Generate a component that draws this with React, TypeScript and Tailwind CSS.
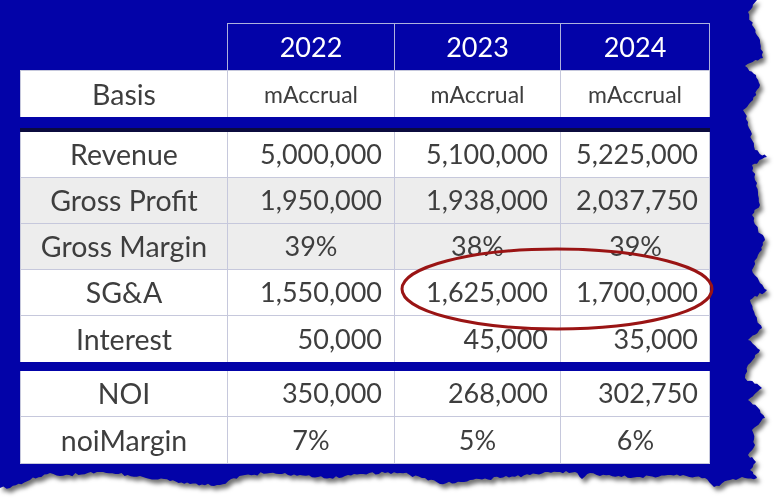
import React from 'react';

type Row = { label: string; vals: string[]; gray?: boolean; pct?: boolean };

const topRows: Row[] = [
  { label: 'Revenue', vals: ['5,000,000', '5,100,000', '5,225,000'] },
  { label: 'Gross Profit', vals: ['1,950,000', '1,938,000', '2,037,750'], gray: true },
  { label: 'Gross Margin', vals: ['39%', '38%', '39%'], gray: true, pct: true },
  { label: 'SG&A', vals: ['1,550,000', '1,625,000', '1,700,000'] },
  { label: 'Interest', vals: ['50,000', '45,000', '35,000'] },
];

const bottomRows: Row[] = [
  { label: 'NOI', vals: ['350,000', '268,000', '302,750'] },
  { label: 'noiMargin', vals: ['7%', '5%', '6%'], pct: true },
];

// key points of the torn paper edge (right side going down, then bottom going left)
const edge: [number, number][] = [
  [757, 0], [748, 12], [752, 25], [760, 40], [763, 58], [745, 66], [756, 75], [760, 85],
  [753, 100], [743, 110], [748, 122], [752, 140], [755, 150], [767, 157], [752, 165],
  [755, 180], [758, 195], [760, 205], [752, 215], [758, 230], [765, 240], [758, 255],
  [752, 270], [760, 283], [767, 290], [750, 300], [755, 315], [762, 328], [748, 340],
  [760, 350], [748, 365], [745, 378], [762, 388], [748, 400], [760, 410], [765, 418],
  [752, 430], [755, 445], [748, 455], [756, 462], [750, 470], [757, 478],
  [745, 478], [730, 480], [714, 487], [705, 478], [680, 476], [640, 477], [600, 476],
  [590, 473], [582, 479], [575, 472], [560, 472], [530, 475], [500, 478], [470, 480],
  [440, 484], [425, 478], [400, 473], [385, 473], [360, 474], [330, 478], [300, 475],
  [270, 473], [245, 475], [220, 485], [190, 484], [170, 481], [140, 476], [100, 472],
  [60, 476], [50, 473], [30, 480], [10, 488], [0, 488],
];

function rnd(i: number) {
  const x = Math.sin(i * 12.9898 + 4.1) * 43758.5453;
  return x - Math.floor(x);
}

function tornPath() {
  const pts: string[] = ['0px 0px'];
  let k = 0;
  for (let i = 0; i < edge.length - 1; i++) {
    const [x1, y1] = edge[i];
    const [x2, y2] = edge[i + 1];
    const len = Math.hypot(x2 - x1, y2 - y1);
    const steps = Math.max(1, Math.round(len / 3));
    for (let s = 0; s < steps; s++) {
      const t = s / steps;
      const j = s === 0 ? 0 : (rnd(k++) - 0.5) * 3;
      const vertical = Math.abs(y2 - y1) > Math.abs(x2 - x1);
      const x = x1 + (x2 - x1) * t + (vertical ? j : 0);
      const y = y1 + (y2 - y1) * t + (vertical ? 0 : j);
      pts.push(`${x.toFixed(1)}px ${y.toFixed(1)}px`);
    }
  }
  const last = edge[edge.length - 1];
  pts.push(`${last[0]}px ${last[1]}px`);
  return `polygon(${pts.join(',')})`;
}

function DataRow({ row, last }: { row: Row; last?: boolean }) {
  const bg = row.gray ? 'bg-[#ededed]' : 'bg-white';
  return (
    <div
      className={`grid h-[46px] grid-cols-[207px_167px_166px_149px] ${bg} ${last ? '' : 'border-b border-[#c6c8dc]'}`}
    >
      <div className="flex items-center justify-center border-r border-[#c6c8dc] text-[28.5px]">{row.label}</div>
      {row.vals.map((v, i) => (
        <div
          key={i}
          className={`flex items-center ${row.pct ? 'justify-center' : 'justify-end pr-[12px]'} ${i < 2 ? 'border-r border-[#c6c8dc]' : ''}`}
        >
          {v}
        </div>
      ))}
    </div>
  );
}

export default function App() {
  return (
    <div className="relative h-[498px] w-[774px] overflow-hidden bg-white font-['Lato',sans-serif] text-[27px] text-[#3e3e3e]">
      <div className="drop-shadow-[3px_4px_2px_rgba(0,0,0,0.55)]">
        <div className="h-[498px] w-[774px] bg-[#0303a8] pl-[20px] pt-[23px]" style={{ clipPath: tornPath() }}>
          <div className="w-[690px]">
            {/* year header */}
            <div className="grid h-[47px] grid-cols-[208px_167px_166px_149px] text-white">
              <div className="border-r border-[#aeb2dd]" />
              {['2022', '2023', '2024'].map((y) => (
                <div key={y} className="flex items-center justify-center border-r border-t border-[#aeb2dd]">
                  {y}
                </div>
              ))}
            </div>

            {/* basis */}
            <div className="border-l border-[#c6c8dc]">
              <div className="grid h-[47px] grid-cols-[207px_167px_166px_149px] border-t border-[#c6c8dc] bg-white">
                <div className="flex items-center justify-center border-r border-[#c6c8dc] text-[28.5px]">Basis</div>
                <div className="flex items-center justify-center border-r border-[#c6c8dc] text-[23px]">mAccrual</div>
                <div className="flex items-center justify-center border-r border-[#c6c8dc] text-[23px]">mAccrual</div>
                <div className="flex items-center justify-center border-r border-[#c6c8dc] text-[23px]">mAccrual</div>
              </div>
            </div>

            <div className="h-[15px] border-b-4 border-[#0b0b3e] bg-[#0303a8]" />

            <div className="border-x border-[#c6c8dc]">
              {topRows.map((r, i) => (
                <DataRow key={r.label} row={r} last={i === topRows.length - 1} />
              ))}
            </div>

            <div className="h-[9px] bg-[#0303a8]" />

            <div className="border-x border-b border-[#c6c8dc]">
              {bottomRows.map((r, i) => (
                <DataRow key={r.label} row={r} last={i === bottomRows.length - 1} />
              ))}
            </div>
          </div>
        </div>
      </div>

      <svg className="pointer-events-none absolute left-0 top-0" width="774" height="498">
        <ellipse cx="557" cy="289" rx="155" ry="40" fill="none" stroke="#9a1414" strokeWidth="3" />
      </svg>
    </div>
  );
}
